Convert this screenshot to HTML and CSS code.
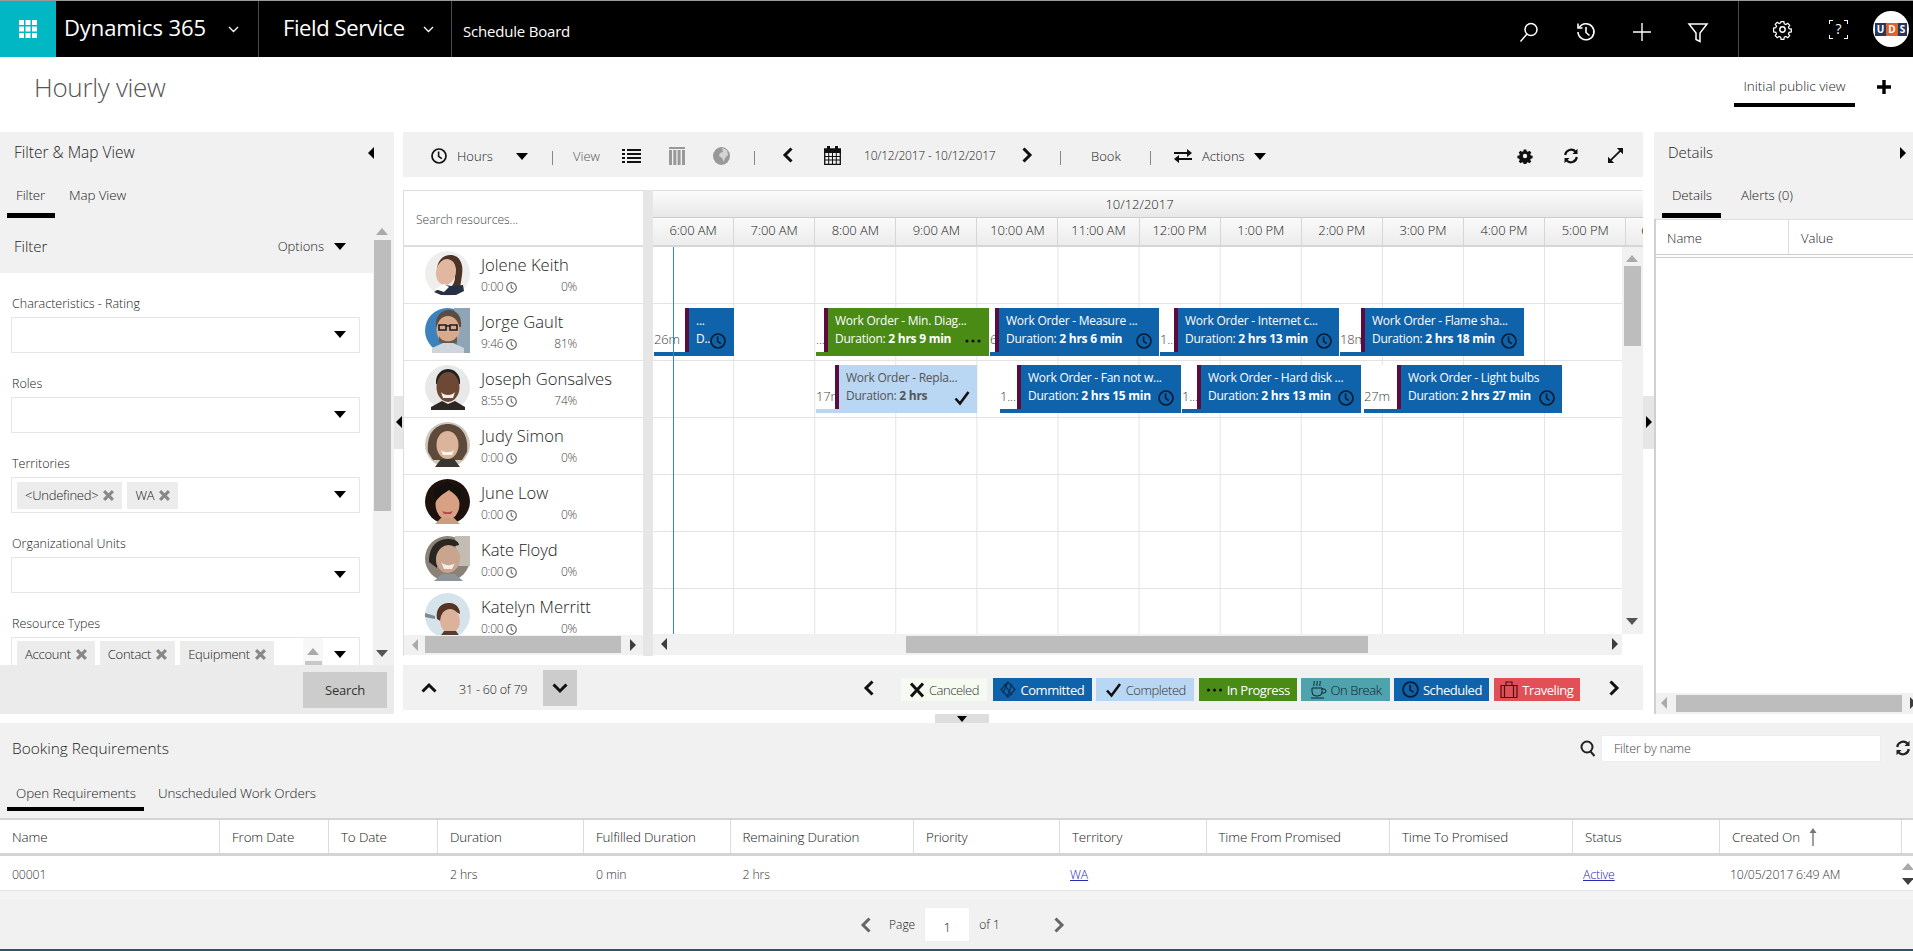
FILE: index.html
```html
<!DOCTYPE html>
<html lang="en">
<head>
    <meta charset="UTF-8">
    <title>Schedule Board</title>
    <link rel="stylesheet" href="styles.css">
</head>
<body>
    <!-- shared icons -->
    <svg class="defs" width="0" height="0">
        <symbol id="i-clock" viewBox="0 0 16 16"><circle cx="8" cy="8" r="7" fill="none" stroke="currentColor" stroke-width="1.7"/><path d="M7.6 3.6V8.4l3.2 2.3" fill="none" stroke="currentColor" stroke-width="1.6"/></symbol>
        <symbol id="i-check" viewBox="0 0 16 16"><path d="M1.5 8.5l4.5 5L14.5 2" fill="none" stroke="currentColor" stroke-width="2.6"/></symbol>
        <symbol id="i-x" viewBox="0 0 16 16"><path d="M2 1.5l12 13M14 1.5l-12 13" fill="none" stroke="currentColor" stroke-width="3"/></symbol>
        <symbol id="i-dots" viewBox="0 0 16 4"><circle cx="2" cy="2" r="1.6" fill="currentColor"/><circle cx="8" cy="2" r="1.6" fill="currentColor"/><circle cx="14" cy="2" r="1.6" fill="currentColor"/></symbol>
        <symbol id="i-left" viewBox="0 0 12 16"><path d="M9.5 1.5L3 8l6.5 6.5" fill="none" stroke="currentColor" stroke-width="3"/></symbol>
        <symbol id="i-right" viewBox="0 0 12 16"><path d="M2.5 1.5L9 8l-6.5 6.5" fill="none" stroke="currentColor" stroke-width="3"/></symbol>
        <symbol id="i-up" viewBox="0 0 16 12"><path d="M1.5 9.5L8 3l6.5 6.5" fill="none" stroke="currentColor" stroke-width="3"/></symbol>
        <symbol id="i-down" viewBox="0 0 16 12"><path d="M1.5 2.5L8 9l6.5-6.5" fill="none" stroke="currentColor" stroke-width="3"/></symbol>
        <symbol id="i-tiny-x" viewBox="0 0 10 10"><path d="M1 1l8 8M9 1l-8 8" fill="none" stroke="currentColor" stroke-width="2.8"/></symbol>
        <symbol id="i-sync" viewBox="0 0 16 16"><path d="M2.2 7A6 6 0 0 1 12.6 3.7M13.8 9A6 6 0 0 1 3.4 12.3" fill="none" stroke="currentColor" stroke-width="2.2"/><path d="M14.5 0.8V6H9.5zM1.5 15.2V10H6.5z" fill="currentColor"/></symbol>
        <symbol id="i-gear" viewBox="0 0 16 16"><path fill="currentColor" fill-rule="evenodd" d="M6.5 0.5h3l.4 2.1 1.4.6 1.8-1.2 2.1 2.1-1.2 1.8.6 1.4 2.1.4v3l-2.1.4-.6 1.4 1.2 1.8-2.1 2.1-1.8-1.2-1.4.6-.4 2.1h-3l-.4-2.1-1.4-.6-1.8 1.2-2.1-2.1 1.2-1.8-.6-1.4-2.1-.4v-3l2.1-.4.6-1.4-1.2-1.8 2.1-2.1 1.8 1.2 1.4-.6zM8 5.5a2.5 2.5 0 1 0 0 5 2.5 2.5 0 0 0 0-5z" transform="translate(1 1) scale(.875)"/></symbol>
    </svg>

    <header class="topbar">
        <div class="app-tile">
            <svg width="18" height="18" viewBox="0 0 18 18" fill="#fff"><rect width="5" height="5"/><rect x="6.5" width="5" height="5"/><rect x="13" width="5" height="5"/><rect y="6.5" width="5" height="5"/><rect x="6.5" y="6.5" width="5" height="5"/><rect x="13" y="6.5" width="5" height="5"/><rect y="13" width="5" height="5"/><rect x="6.5" y="13" width="5" height="5"/><rect x="13" y="13" width="5" height="5"/></svg>
        </div>
        <div class="nav-group nav-first">
            <span class="nav-title">Dynamics 365</span>
            <svg class="nav-chev" width="11" height="7" viewBox="0 0 11 7"><path d="M1 1l4.5 4.5L10 1" fill="none" stroke="#fff" stroke-width="1.3"/></svg>
        </div>
        <div class="nav-group nav-second">
            <span class="nav-title">Field Service</span>
            <svg class="nav-chev" width="11" height="7" viewBox="0 0 11 7"><path d="M1 1l4.5 4.5L10 1" fill="none" stroke="#fff" stroke-width="1.3"/></svg>
        </div>
        <div class="nav-page">Schedule Board</div>
        <div class="top-actions">
            <svg width="22" height="22" viewBox="0 0 22 22" fill="none" stroke="#fff" stroke-width="1.5"><circle cx="13" cy="8.5" r="6"/><path d="M9 13L2.5 20.5"/></svg>
            <svg width="22" height="22" viewBox="0 0 22 22" fill="none" stroke="#fff" stroke-width="1.6"><path d="M4.2 6.5A8 8 0 1 1 3 11"/><path d="M3 2.5V7h4.5"/><path d="M11 6v5.5l3.5 3"/></svg>
            <svg width="20" height="20" viewBox="0 0 20 20" stroke="#fff" stroke-width="1.4"><path d="M10 1v18M1 10h18"/></svg>
            <svg width="22" height="22" viewBox="0 0 22 22" fill="none" stroke="#fff" stroke-width="1.5"><path d="M2 3h18l-7 9v8.5l-4-2V12z"/></svg>
        </div>
        <div class="top-tools">
            <svg class="tool-gear" width="21" height="21" viewBox="0 0 22 22" fill="none" stroke="#fff" stroke-width="1.5"><circle cx="11" cy="11" r="2.8"/><path d="M9.3 1.5h3.4l.5 2.7 1.9.8 2.3-1.5 2.4 2.4-1.5 2.3.8 1.9 2.7.5v3.4l-2.7.5-.8 1.9 1.5 2.3-2.4 2.4-2.3-1.5-1.9.8-.5 2.7H9.3l-.5-2.7-1.9-.8-2.3 1.5-2.4-2.4 1.5-2.3-.8-1.9-2.7-.5V9.3l2.7-.5.8-1.9-1.5-2.3 2.4-2.4 2.3 1.5 1.9-.8z" transform="translate(1.5 1.5) scale(.86)"/></svg>
            <div class="help-box">?</div>
            <div class="user-badge"><span class="ub-u">U</span><span class="ub-d">D</span><span class="ub-s">S</span></div>
        </div>
    </header>

    <div class="page-head">
        <h1 class="page-title">Hourly view</h1>
        <div class="view-tab">Initial public view</div>
        <svg class="view-add" width="14" height="14" viewBox="0 0 14 14"><path d="M7 0v14M0 7h14" stroke="#000" stroke-width="3.4"/></svg>
    </div>

    <main class="main">
        <!-- Filter panel -->
        <aside class="filter-panel">
            <div class="panel-top">
                <div class="panel-title">Filter &amp; Map View <span class="tri-left panel-tri"></span></div>
                <div class="tabs filter-tabs">
                    <div class="tab active">Filter</div>
                    <div class="tab">Map View</div>
                </div>
            </div>
            <div class="filter-scroll">
                <div class="filter-body">
                    <div class="filter-head">
                        <span class="filter-name">Filter</span>
                        <span class="filter-options">Options</span>
                        <span class="tri-down"></span>
                    </div>
                    <div class="fields">
                        <div class="field">
                            <label>Characteristics - Rating</label>
                            <div class="select"><span class="tri-down"></span></div>
                        </div>
                        <div class="field">
                            <label>Roles</label>
                            <div class="select"><span class="tri-down"></span></div>
                        </div>
                        <div class="field">
                            <label>Territories</label>
                            <div class="select">
                                <span class="chip">&lt;Undefined&gt; <svg width="11" height="11"><use href="#i-tiny-x"/></svg></span>
                                <span class="chip">WA <svg width="11" height="11"><use href="#i-tiny-x"/></svg></span>
                                <span class="tri-down"></span>
                            </div>
                        </div>
                        <div class="field">
                            <label>Organizational Units</label>
                            <div class="select"><span class="tri-down"></span></div>
                        </div>
                        <div class="field">
                            <label>Resource Types</label>
                            <div class="select select-open">
                                <span class="chip">Account <svg width="11" height="11"><use href="#i-tiny-x"/></svg></span>
                                <span class="chip">Contact <svg width="11" height="11"><use href="#i-tiny-x"/></svg></span>
                                <span class="chip">Equipment <svg width="11" height="11"><use href="#i-tiny-x"/></svg></span>
                                <span class="mini-scroll"><span class="tri-up tri-grey"></span><span class="mini-thumb"></span></span>
                                <span class="tri-down"></span>
                            </div>
                        </div>
                    </div>
                </div>
                <div class="vscroll filter-vscroll">
                    <span class="tri-up tri-grey"></span>
                    <div class="thumb"></div>
                    <span class="tri-down tri-grey"></span>
                </div>
            </div>
            <div class="search-bar"><button class="search-btn">Search</button></div>
        </aside>

        <div class="splitter"><span class="tri-left"></span></div>

        <!-- Schedule board -->
        <section class="center">
            <div class="toolbar">
                <svg class="tb-clock" width="16" height="16"><use href="#i-clock"/></svg>
                <span class="tb-hours">Hours</span>
                <span class="tri-down tb-caret"></span>
                <span class="tb-sep tb-sep1"></span>
                <span class="tb-view">View</span>
                <svg class="tb-list" width="19" height="14" viewBox="0 0 19 14"><path d="M0 1h3M5 1h14M0 5h3M5 5h14M0 9h3M5 9h14M0 13h3M5 13h14" stroke="#111" stroke-width="2.2"/></svg>
                <svg class="tb-grid" width="16" height="18" viewBox="0 0 16 18" fill="#999"><rect y="0" width="16" height="2"/><rect y="3" width="3" height="15"/><rect x="4.3" y="3" width="3" height="15"/><rect x="8.6" y="3" width="3" height="15"/><rect x="13" y="3" width="3" height="15"/></svg>
                <svg class="tb-globe" width="17" height="18" viewBox="0 0 17 18"><ellipse cx="8.5" cy="9" rx="8.5" ry="9" fill="#999"/><path d="M9 1l5 2 1 5-3 3-1 4-2-4-3-2 1-3 3-1z" fill="#d4d4d4"/></svg>
                <span class="tb-sep tb-sep2"></span>
                <svg class="tb-prev" width="12" height="16"><use href="#i-left"/></svg>
                <svg class="tb-cal" width="17" height="19" viewBox="0 0 17 19"><path d="M.7 3h15.6v15.3H.7z" fill="none" stroke="#111" stroke-width="1.3"/><path d="M0 3h17v4H0zM3 0h3v4H3zM11 0h3v4h-3z" fill="#111"/><path d="M4.7 7v11M8.5 7v11M12.3 7v11M1 10.5h15M1 14h15" stroke="#111"/></svg>
                <span class="tb-date">10/12/2017 - 10/12/2017</span>
                <svg class="tb-next" width="12" height="16"><use href="#i-right"/></svg>
                <span class="tb-sep tb-sep3"></span>
                <span class="tb-book">Book</span>
                <span class="tb-sep tb-sep4"></span>
                <svg class="tb-swap" width="18" height="14" viewBox="0 0 18 14"><path d="M0 4h14" stroke="#111" stroke-width="2"/><path d="M13 0l5 4-5 4z" fill="#111"/><path d="M18 10H4" stroke="#111" stroke-width="2"/><path d="M5 6l-5 4 5 4z" fill="#111"/></svg>
                <span class="tb-actions">Actions</span>
                <span class="tri-down tb-caret2"></span>
                <svg class="tb-gear" width="16" height="16"><use href="#i-gear"/></svg>
                <svg class="tb-sync" width="16" height="16"><use href="#i-sync"/></svg>
                <svg class="tb-expand" width="15" height="15" viewBox="0 0 17 17"><path d="M2 15L15 2" stroke="#111" stroke-width="2"/><path d="M10 0h7v7zM0 10v7h7z" fill="#111"/></svg>
            </div>

            <div class="board">
                <div class="res-col">
                    <div class="res-search">Search resources...</div>
                    <div class="res-list">
                        <div class="res-row">
                            <svg class="avatar" viewBox="0 0 45 45"><circle cx="22.5" cy="22.5" r="22.5" fill="#f0eeec"/><path d="M12 22C11 8 20 3 27 4c7 1 12 8 10 20l-2 13-8-2c6-8 2-16-3-19-3 4-8 5-12 6z" fill="#4a3428"/><ellipse cx="21" cy="21" rx="10" ry="13" fill="#e2b7a0" transform="rotate(12 21 21)"/><path d="M9 41l11-7 6 1 12-1 1 6-8 4H16z" fill="#253044"/><path d="M10 38l9-5 5 3-5 5z" fill="#fff"/></svg>
                            <div class="res-info">
                                <div class="res-name">Jolene Keith</div>
                                <div class="res-stats">0:00 <svg width="11" height="11"><use href="#i-clock"/></svg><span class="res-pct">0%</span></div>
                            </div>
                        </div>
                        <div class="res-row">
                            <svg class="avatar" viewBox="0 0 45 45"><circle cx="22.5" cy="22.5" r="22.5" fill="#3c83bd"/><path d="M29 0h16v45H33z" fill="#8fa5b5"/><path d="M11 19C10 6 18 2 24 2s13 4 12 17z" fill="#5d4c3e"/><ellipse cx="23" cy="22" rx="11.5" ry="14" fill="#d8ab8f"/><path d="M14 17h7v5h-7zM25 17h7v5h-7zM21 18h4" fill="none" stroke="#1e1e22" stroke-width="1.6"/><path d="M14 28c3 7 15 7 18 0v6l-9 4-9-4z" fill="#6d5648"/><path d="M7 40l11-5h10l11 5v5H7z" fill="#cfd5dc"/></svg>
                            <div class="res-info">
                                <div class="res-name">Jorge Gault</div>
                                <div class="res-stats">9:46 <svg width="11" height="11"><use href="#i-clock"/></svg><span class="res-pct">81%</span></div>
                            </div>
                        </div>
                        <div class="res-row">
                            <svg class="avatar" viewBox="0 0 45 45"><circle cx="22.5" cy="22.5" r="22.5" fill="#e8e8e8"/><path d="M11 19C10 8 18 4 23 4s13 4 12 15z" fill="#232020"/><ellipse cx="23" cy="22" rx="11.5" ry="15" fill="#6d4834"/><path d="M16 27c3 4 11 4 14 0l-2 6H18z" fill="#f4eee8"/><path d="M6 42l11-6 6 3 7-3 10 6v3H6z" fill="#2a2724"/></svg>
                            <div class="res-info">
                                <div class="res-name">Joseph Gonsalves</div>
                                <div class="res-stats">8:55 <svg width="11" height="11"><use href="#i-clock"/></svg><span class="res-pct">74%</span></div>
                            </div>
                        </div>
                        <div class="res-row">
                            <svg class="avatar" viewBox="0 0 45 45"><circle cx="22.5" cy="22.5" r="22.5" fill="#cfc6bc"/><path d="M3 30C1 10 12 2 23 2s21 9 19 28l-5 8H8z" fill="#5d4a3a"/><ellipse cx="22.5" cy="23" rx="11" ry="14" fill="#dcb49b"/><path d="M16 28c3 3 10 3 13 0l-2 5h-9z" fill="#fbf5ef"/><path d="M10 45l6-8h13l6 8z" fill="#3b3630"/></svg>
                            <div class="res-info">
                                <div class="res-name">Judy Simon</div>
                                <div class="res-stats">0:00 <svg width="11" height="11"><use href="#i-clock"/></svg><span class="res-pct">0%</span></div>
                            </div>
                        </div>
                        <div class="res-row">
                            <svg class="avatar" viewBox="0 0 45 45"><circle cx="22.5" cy="22.5" r="22.5" fill="#1d120e"/><ellipse cx="22.5" cy="25" rx="12" ry="16" fill="#d9a184"/><path d="M10 24C14 16 22 13 24 11c4 3 9 6 11 13l1-14L22 3 9 10z" fill="#14100e"/><path d="M17 32c3 1.5 8 1.5 11 0l-2 3h-7z" fill="#b5484c"/><path d="M10 45l6-6h13l6 6z" fill="#cf9c80"/></svg>
                            <div class="res-info">
                                <div class="res-name">June Low</div>
                                <div class="res-stats">0:00 <svg width="11" height="11"><use href="#i-clock"/></svg><span class="res-pct">0%</span></div>
                            </div>
                        </div>
                        <div class="res-row">
                            <svg class="avatar" viewBox="0 0 45 45"><circle cx="22.5" cy="22.5" r="22.5" fill="#8a8279"/><path d="M30 0h15v30H32z" fill="#c3bcb2"/><path d="M4 26C4 8 14 3 24 3c6 0 10 3 10 6L15 14l-3 18z" fill="#2c2622"/><ellipse cx="23" cy="23" rx="12" ry="14" fill="#c9a48e" transform="rotate(8 23 23)"/><path d="M16 26c3 4 11 4 14 1l-3 6h-8z" fill="#f2ede8"/><path d="M9 45l8-7h13l8 7z" fill="#8e9497"/></svg>
                            <div class="res-info">
                                <div class="res-name">Kate Floyd</div>
                                <div class="res-stats">0:00 <svg width="11" height="11"><use href="#i-clock"/></svg><span class="res-pct">0%</span></div>
                            </div>
                        </div>
                        <div class="res-row">
                            <svg class="avatar" viewBox="0 0 45 45"><circle cx="22.5" cy="22.5" r="22.5" fill="#d7e3ea"/><path d="M0 20l10 3v3L0 24z" fill="#7b8a92"/><path d="M12 26C10 14 18 9 25 10c6 0 10 5 10 11-6-3-13-3-16-1l-2 9z" fill="#543423"/><ellipse cx="25" cy="28" rx="10" ry="12" fill="#ddb29a"/><path d="M14 45l5-7h12l5 7z" fill="#593c2c"/></svg>
                            <div class="res-info">
                                <div class="res-name">Katelyn Merritt</div>
                                <div class="res-stats">0:00 <svg width="11" height="11"><use href="#i-clock"/></svg><span class="res-pct">0%</span></div>
                            </div>
                        </div>
                    </div>
                    <div class="hscroll res-hscroll">
                        <span class="tri-left tri-grey"></span>
                        <div class="thumb"></div>
                        <span class="tri-right tri-dark"></span>
                    </div>
                </div>
                <div class="board-gap"></div>
                <div class="sched">
                    <div class="sched-date">10/12/2017</div>
                    <div class="sched-hours">
                        <div class="hour">6:00 AM</div>
                        <div class="hour">7:00 AM</div>
                        <div class="hour">8:00 AM</div>
                        <div class="hour">9:00 AM</div>
                        <div class="hour">10:00 AM</div>
                        <div class="hour">11:00 AM</div>
                        <div class="hour">12:00 PM</div>
                        <div class="hour">1:00 PM</div>
                        <div class="hour">2:00 PM</div>
                        <div class="hour">3:00 PM</div>
                        <div class="hour">4:00 PM</div>
                        <div class="hour">5:00 PM</div>
                        <div class="hour hour-cut">6</div>
                    </div>
                    <div class="sched-body">
                        <div class="sched-grid">
                            <div class="sched-row"></div>
                            <div class="sched-row">
                                <div class="job scheduled" style="left:1px">
                                    <div class="travel" style="width:31px">26m</div><div class="job-edge"></div>
                                    <div class="job-body" style="width:45px"><div class="job-title">...</div><div class="job-dur">D..</div><svg class="job-icon job-icon-tight" width="16" height="16"><use href="#i-clock"/></svg></div>
                                </div>
                                <div class="job progress" style="left:163px">
                                    <div class="travel" style="width:8px">...</div><div class="job-edge"></div>
                                    <div class="job-body" style="width:161px"><div class="job-title">Work Order - Min. Diag...</div><div class="job-dur">Duration: <b>2 hrs 9 min</b></div><svg class="job-dots" width="16" height="4"><use href="#i-dots"/></svg></div>
                                </div>
                                <div class="job scheduled" style="left:337px">
                                    <div class="travel" style="width:5px">6</div><div class="job-edge"></div>
                                    <div class="job-body" style="width:160px"><div class="job-title">Work Order - Measure ...</div><div class="job-dur">Duration: <b>2 hrs 6 min</b></div><svg class="job-icon" width="16" height="16"><use href="#i-clock"/></svg></div>
                                </div>
                                <div class="job scheduled" style="left:507px">
                                    <div class="travel" style="width:14px">1...</div><div class="job-edge"></div>
                                    <div class="job-body" style="width:161px"><div class="job-title">Work Order - Internet c...</div><div class="job-dur">Duration: <b>2 hrs 13 min</b></div><svg class="job-icon" width="16" height="16"><use href="#i-clock"/></svg></div>
                                </div>
                                <div class="job scheduled" style="left:687px">
                                    <div class="travel" style="width:21px">18m</div><div class="job-edge"></div>
                                    <div class="job-body" style="width:159px"><div class="job-title">Work Order - Flame sha...</div><div class="job-dur">Duration: <b>2 hrs 18 min</b></div><svg class="job-icon" width="16" height="16"><use href="#i-clock"/></svg></div>
                                </div>
                            </div>
                            <div class="sched-row">
                                <div class="job completed" style="left:163px">
                                    <div class="travel" style="width:19px">17m</div><div class="job-edge"></div>
                                    <div class="job-body" style="width:138px"><div class="job-title">Work Order - Repla...</div><div class="job-dur">Duration: <b>2 hrs</b></div><svg class="job-icon" width="16" height="16"><use href="#i-check"/></svg></div>
                                </div>
                                <div class="job scheduled" style="left:347px">
                                    <div class="travel" style="width:17px">1...</div><div class="job-edge"></div>
                                    <div class="job-body" style="width:160px"><div class="job-title">Work Order - Fan not w...</div><div class="job-dur">Duration: <b>2 hrs 15 min</b></div><svg class="job-icon" width="16" height="16"><use href="#i-clock"/></svg></div>
                                </div>
                                <div class="job scheduled" style="left:529px">
                                    <div class="travel" style="width:15px">1...</div><div class="job-edge"></div>
                                    <div class="job-body" style="width:160px"><div class="job-title">Work Order - Hard disk ...</div><div class="job-dur">Duration: <b>2 hrs 13 min</b></div><svg class="job-icon" width="16" height="16"><use href="#i-clock"/></svg></div>
                                </div>
                                <div class="job scheduled" style="left:711px">
                                    <div class="travel" style="width:33px">27m</div><div class="job-edge"></div>
                                    <div class="job-body" style="width:161px"><div class="job-title">Work Order - Light bulbs</div><div class="job-dur">Duration: <b>2 hrs 27 min</b></div><svg class="job-icon" width="16" height="16"><use href="#i-clock"/></svg></div>
                                </div>
                            </div>
                            <div class="sched-row"></div>
                            <div class="sched-row"></div>
                            <div class="sched-row"></div>
                            <div class="sched-row"></div>
                            <div class="now-line"></div>
                        </div>
                        <div class="vscroll sched-vscroll">
                            <span class="tri-up tri-grey"></span>
                            <div class="thumb"></div>
                            <span class="tri-down tri-grey"></span>
                        </div>
                    </div>
                    <div class="hscroll sched-hscroll">
                        <span class="tri-left tri-dark"></span>
                        <div class="thumb"></div>
                        <span class="tri-right tri-dark"></span>
                    </div>
                </div>
            </div>

            <div class="pager">
                <svg class="pg-up" width="16" height="12"><use href="#i-up"/></svg>
                <span class="pg-count">31 - 60 of 79</span>
                <div class="pg-down"><svg width="16" height="12"><use href="#i-down"/></svg></div>
                <svg class="lg-prev" width="12" height="16"><use href="#i-left"/></svg>
                <div class="legend">
                    <div class="lg-item lg-canceled"><svg width="16" height="16"><use href="#i-x"/></svg>Canceled</div>
                    <div class="lg-item lg-committed"><svg width="16" height="17" viewBox="0 0 16 17" fill="none" stroke="#0b2f52" stroke-width="1.2"><path d="M8 1l7 7.5L8 16 1 8.5z"/><path d="M4 3l8 11M8 1L3 12M12 3L7 16"/></svg>Committed</div>
                    <div class="lg-item lg-completed"><svg width="17" height="16"><use href="#i-check"/></svg>Completed</div>
                    <div class="lg-item lg-progress"><svg width="17" height="4" viewBox="0 0 16 4"><use href="#i-dots"/></svg>In Progress</div>
                    <div class="lg-item lg-break"><svg width="17" height="19" viewBox="0 0 17 19" fill="none" stroke="#123" stroke-width="1"><path d="M2 8h10v4a4 4 0 0 1-4 4H6a4 4 0 0 1-4-4z"/><path d="M12 9h2a1.5 1.5 0 0 1 0 4h-2M1 18h13M4 6c-1-2 1-2 0-5M7 6c-1-2 1-2 0-5M10 6c-1-2 1-2 0-5"/></svg>On Break</div>
                    <div class="lg-item lg-scheduled"><svg width="17" height="17"><use href="#i-clock"/></svg>Scheduled</div>
                    <div class="lg-item lg-traveling"><svg width="18" height="17" viewBox="0 0 18 17" fill="none" stroke="#4b1216" stroke-width="1.2"><path d="M1 4.5h16v12H1zM6 4.5V1h6v3.5M4.5 4.5v12M13.5 4.5v12"/></svg>Traveling</div>
                </div>
                <svg class="lg-next" width="12" height="16"><use href="#i-right"/></svg>
            </div>
        </section>

        <div class="splitter splitter-right"><span class="tri-right"></span></div>

        <!-- Details panel -->
        <aside class="details-panel">
            <div class="panel-top">
                <div class="panel-title">Details <span class="tri-right panel-tri"></span></div>
                <div class="tabs details-tabs">
                    <div class="tab active">Details</div>
                    <div class="tab">Alerts (0)</div>
                </div>
            </div>
            <div class="details-body">
                <div class="details-head">
                    <div class="dh-name">Name</div>
                    <div class="dh-value">Value</div>
                </div>
                <div class="details-empty"></div>
                <div class="hscroll details-hscroll">
                    <span class="tri-left tri-grey"></span>
                    <div class="thumb"></div>
                    <span class="tri-right tri-dark"></span>
                </div>
            </div>
        </aside>
    </main>

    <!-- Booking requirements -->
    <section class="bottom">
        <div class="collapse-tab"><span class="tri-down"></span></div>
        <div class="req-head">
            <div class="req-title">Booking Requirements</div>
            <svg class="req-search" width="16" height="17" viewBox="0 0 16 17" fill="none" stroke="#222" stroke-width="2"><circle cx="7" cy="7" r="5.5"/><path d="M10.5 11.5L14.5 16"/></svg>
            <div class="req-filter">Filter by name</div>
            <svg class="req-sync" width="16" height="16"><use href="#i-sync"/></svg>
        </div>
        <div class="tabs req-tabs">
            <div class="tab active">Open Requirements</div>
            <div class="tab">Unscheduled Work Orders</div>
        </div>
        <div class="req-table">
            <div class="req-row req-header">
                <div class="c1">Name</div><div class="c2">From Date</div><div class="c3">To Date</div><div class="c4">Duration</div><div class="c5">Fulfilled Duration</div><div class="c6">Remaining Duration</div><div class="c7">Priority</div><div class="c8">Territory</div><div class="c9">Time From Promised</div><div class="c10">Time To Promised</div><div class="c11">Status</div>
                <div class="c12">Created On <svg width="10" height="18" viewBox="0 0 10 18"><path d="M5 2v16" stroke="#777" stroke-width="1.4"/><path d="M5 0l3.5 5h-7z" fill="#777"/></svg></div>
                <div class="c13"></div>
            </div>
            <div class="req-row req-data">
                <div class="c1">00001</div><div class="c2"></div><div class="c3"></div><div class="c4">2 hrs</div><div class="c5">0 min</div><div class="c6">2 hrs</div><div class="c7"></div><div class="c8"><a href="#">WA</a></div><div class="c9"></div><div class="c10"></div><div class="c11"><a href="#">Active</a></div><div class="c12">10/05/2017 6:49 AM</div>
                <div class="c13 req-scroll"><span class="tri-up tri-grey"></span><span class="tri-down tri-dark"></span></div>
            </div>
            <div class="req-tail"></div>
        </div>
        <div class="req-pager">
            <svg class="rp-prev" width="12" height="16"><use href="#i-left"/></svg>
            <span>Page</span>
            <div class="rp-input">1</div>
            <span>of 1</span>
            <svg class="rp-next" width="12" height="16"><use href="#i-right"/></svg>
        </div>
    </section>
    <div class="foot-strip"></div>
</body>
</html>
```
FILE: styles.css
```css
* {
    box-sizing: border-box;
}
html, body {
    margin: 0;
    height: 951px;
    overflow: hidden;
}
body {
    font-family: "Open Sans", "Noto Sans", sans-serif;
    font-size: 13px;
    color: #444;
    background-color: #fff;
    width: 1913px;
}
.defs {
    position: absolute;
}

/* triangles */
.tri-down, .tri-up, .tri-left, .tri-right {
    display: inline-block;
    width: 0;
    height: 0;
    flex: none;
}
.tri-down {
    border-left: 6px solid transparent;
    border-right: 6px solid transparent;
    border-top: 7px solid #000;
}
.tri-up {
    border-left: 6px solid transparent;
    border-right: 6px solid transparent;
    border-bottom: 7px solid #000;
}
.tri-left {
    border-top: 6px solid transparent;
    border-bottom: 6px solid transparent;
    border-right: 6px solid #000;
}
.tri-right {
    border-top: 6px solid transparent;
    border-bottom: 6px solid transparent;
    border-left: 6px solid #000;
}
.tri-up.tri-grey {
    border-bottom-color: #aaa;
}
.tri-down.tri-grey {
    border-top-color: #555;
}
.tri-left.tri-grey {
    border-right-color: #aaa;
}
.tri-dark {
    opacity: .75;
}

/* top bar */
.topbar {
    height: 57px;
    background-color: #000;
    border-top: 1px solid #9a9a9a;
    display: flex;
    color: #fff;
}
.app-tile {
    width: 56px;
    background-color: #00b7c3;
    display: flex;
    align-items: center;
    justify-content: center;
}
.nav-group {
    display: flex;
    align-items: center;
    border-right: 1px solid #4a4a4a;
}
.nav-first {
    width: 203px;
    padding-left: 8px;
}
.nav-second {
    width: 193px;
    padding-left: 24px;
}
.nav-title {
    font-size: 22px;
    line-height: 1;
    margin-top: -5px;
}
.nav-first .nav-title {
    letter-spacing: -.1px;
}
.nav-second .nav-title {
    letter-spacing: -.4px;
}
.nav-first .nav-chev {
    margin-left: 22px;
}
.nav-second .nav-chev {
    margin-left: 18px;
}
.nav-page {
    padding: 15px 0 0 11px;
    font-size: 15px;
    line-height: 30px;
    letter-spacing: -.2px;
}
.top-actions {
    margin-left: auto;
    display: flex;
    align-items: center;
    gap: 35px;
    width: 228px;
    padding: 5px 0 0 7px;
    border-right: 1px solid #4a4a4a;
    height: 100%;
}
.top-tools {
    display: flex;
    align-items: center;
    width: 174px;
    padding-left: 33px;
}
.help-box {
    width: 19px;
    height: 19px;
    margin-left: 36px;
    font-size: 14px;
    line-height: 17px;
    text-align: center;
    background:
        linear-gradient(#fff, #fff) 0 0 / 4px 1px no-repeat,
        linear-gradient(#fff, #fff) 0 0 / 1px 4px no-repeat,
        linear-gradient(#fff, #fff) 100% 0 / 4px 1px no-repeat,
        linear-gradient(#fff, #fff) 100% 0 / 1px 4px no-repeat,
        linear-gradient(#fff, #fff) 0 100% / 4px 1px no-repeat,
        linear-gradient(#fff, #fff) 0 100% / 1px 4px no-repeat,
        linear-gradient(#fff, #fff) 100% 100% / 4px 1px no-repeat,
        linear-gradient(#fff, #fff) 100% 100% / 1px 4px no-repeat;
}
.user-badge {
    width: 36px;
    height: 36px;
    margin-left: 25px;
    border-radius: 50%;
    background-color: #fff;
    display: flex;
    align-items: center;
    justify-content: center;
    font-size: 10px;
    font-weight: 700;
    line-height: 13px;
    color: #fff;
    flex: none;
}
.ub-u, .ub-s {
    background-color: #26375f;
    padding: 0 2px;
}
.ub-d {
    background-color: #d9642c;
    padding: 0 2px;
}

/* page head */
.page-head {
    height: 75px;
    display: flex;
    align-items: flex-start;
}
.page-title {
    margin: 11px 0 0 34px;
    font-size: 26px;
    font-weight: 300;
    line-height: 38px;
    color: #555;
    letter-spacing: -.3px;
}
.view-tab {
    margin-left: auto;
    width: 121px;
    height: 50px;
    padding-top: 19px;
    text-align: center;
    font-size: 13.5px;
    font-weight: 300;
    line-height: 20px;
    color: #222;
    border-bottom: 4px solid #000;
}
.view-add {
    margin: 23px 22px 0 22px;
}

/* main row */
.main {
    height: 591px;
    display: flex;
}
.filter-panel {
    width: 394px;
    display: flex;
    flex-direction: column;
    background-color: #f1f1f1;
    height: 582px;
}
.panel-top {
    height: 87px;
    background-color: #f1f1f1;
    position: relative;
}
.panel-title {
    padding: 9px 14px 0;
    font-size: 15.5px;
    font-weight: 300;
    line-height: 22px;
    color: #222;
}
.panel-tri {
    position: absolute;
    top: 15px;
    right: 20px;
}
.details-panel .panel-tri {
    right: 7px;
}
.details-panel .panel-title {
    font-size: 15px;
    letter-spacing: -.1px;
}
.tabs {
    display: flex;
}
.tab {
    font-size: 13.4px;
    font-weight: 300;
    letter-spacing: -.1px;
    line-height: 20px;
    color: #222;
    white-space: nowrap;
}
.tab.active {
    border-bottom: 5px solid #000;
}
.filter-tabs {
    margin: 22px 0 0 7px;
}
.filter-tabs .tab {
    padding: 0 9px 8px;
    height: 33px;
}
.filter-tabs .tab.active {
    width: 48px;
}
.filter-tabs .tab + .tab {
    padding-left: 14px;
}
.filter-scroll {
    height: 446px;
    display: flex;
}
.filter-body {
    width: 373px;
    overflow: hidden;
    background-color: #fff;
}
.filter-head {
    height: 54px;
    background-color: #f1f1f1;
    display: flex;
    align-items: center;
    padding: 0 27px 0 14px;
}
.filter-name {
    font-size: 15px;
    font-weight: 300;
    color: #222;
}
.filter-options {
    margin-left: auto;
    margin-right: 10px;
    font-size: 13px;
    font-weight: 300;
    color: #222;
}
.field {
    height: 80px;
    padding: 0 13px 0 11px;
}
.fields {
    padding-top: 21px;
}
.field label {
    display: block;
    height: 23px;
    padding-left: 1px;
    font-size: 12.5px;
    font-weight: 300;
    line-height: 20px;
    color: #222;
}
.select {
    height: 36px;
    border: 1px solid #e6e6e6;
    display: flex;
    align-items: center;
    gap: 5px;
    padding-left: 5px;
    position: relative;
}
.select > .tri-down {
    position: absolute;
    right: 13px;
    top: 13px;
}
.chip {
    background-color: #ececec;
    height: 27px;
    padding: 0 8px;
    font-size: 13px;
    font-weight: 300;
    line-height: 27px;
    letter-spacing: -.25px;
    color: #222;
    display: flex;
    align-items: center;
    gap: 5px;
    white-space: nowrap;
}
.chip svg {
    color: #888;
}
.select-open {
    align-items: flex-start;
    padding-top: 3px;
    overflow: hidden;
}
.mini-scroll {
    position: absolute;
    left: 291px;
    top: 0;
    width: 20px;
    height: 36px;
    background-color: #f7f7f7;
    display: flex;
    flex-direction: column;
    align-items: center;
    padding-top: 10px;
    gap: 6px;
}
.mini-thumb {
    width: 17px;
    height: 12px;
    background-color: #c8c8c8;
}
.vscroll {
    width: 21px;
    position: relative;
    background-color: #f1f1f1;
}
.vscroll .thumb {
    position: absolute;
    left: 2px;
    right: 2px;
    background-color: #bdbdbd;
}
.vscroll .tri-up, .vscroll .tri-down {
    position: absolute;
    left: 4px;
}
.filter-vscroll .tri-up {
    top: 9px;
    left: 3px;
}
.filter-vscroll .thumb {
    top: 21px;
    height: 271px;
    left: 1px;
    right: 3px;
}
.filter-vscroll .tri-down {
    bottom: 8px;
    left: 3px;
}
.sched-vscroll .tri-up {
    top: 8px;
}
.sched-vscroll .thumb {
    top: 19px;
    height: 80px;
}
.sched-vscroll .tri-down {
    bottom: 9px;
}
.search-bar {
    height: 49px;
    background-color: #ebebeb;
    padding: 7px 7px 0 0;
    text-align: right;
}
.search-btn {
    width: 84px;
    height: 36px;
    border: none;
    background-color: #ccc;
    font: 13px "Open Sans", sans-serif;
    letter-spacing: -.2px;
    color: #333;
}

/* splitters */
.splitter {
    width: 9px;
    height: 591px;
    padding-top: 264px;
    flex: none;
    display: flex;
    justify-content: center;
    background: linear-gradient(#e6e6e6, #e6e6e6) 0 264px / 100% 53px no-repeat;
}
.splitter .tri-left, .splitter .tri-right {
    margin-top: 20px;
}
.splitter-right {
    width: 11px;
}

/* center */
.center {
    width: 1240px;
    flex: none;
}
.toolbar {
    height: 45px;
    background-color: #f1f1f1;
    position: relative;
    font-size: 13px;
    font-weight: 300;
    color: #222;
}
.toolbar > * {
    position: absolute;
    top: 15px;
    line-height: 18px;
}
.tb-clock { left: 28px; color: #111; top: 16px; }
.tb-hours { left: 54px; }
.tb-caret { left: 113px; top: 21px; }
.tb-sep { width: 1px; height: 14px; background-color: #888; top: 19px; }
.tb-sep1 { left: 149px; }
.tb-view { left: 170px; color: #555; }
.tb-list { left: 219px; top: 17px; }
.tb-grid { left: 266px; top: 15px; }
.tb-globe { left: 310px; top: 15px; }
.tb-sep2 { left: 351px; }
.tb-prev { left: 379px; top: 15px; color: #111; }
.tb-cal { left: 421px; top: 14px; }
.tb-date { left: 461px; font-size: 12px; letter-spacing: -.2px; }
.tb-next { left: 618px; top: 15px; color: #111; }
.tb-sep3 { left: 657px; }
.tb-book { left: 688px; }
.tb-sep4 { left: 747px; }
.tb-swap { left: 771px; top: 17px; }
.tb-actions { left: 799px; }
.tb-caret2 { left: 851px; top: 21px; }
.tb-gear { left: 1114px; top: 16px; color: #111; }
.tb-sync { left: 1160px; top: 16px; color: #111; }
.tb-expand { left: 1205px; top: 16px; }

.board {
    height: 466px;
    margin-top: 13px;
    display: flex;
}
.res-col {
    width: 241px;
    border-left: 1px solid #ddd;
    border-top: 1px solid #ddd;
    border-right: 1px solid #e6e6e6;
    display: flex;
    flex-direction: column;
}
.res-search {
    height: 56px;
    padding: 21px 0 0 12px;
    font-size: 12px;
    font-weight: 300;
    line-height: 16px;
    color: #444;
    border-bottom: 2px solid #ddd;
    flex: none;
}
.res-list {
    height: 388px;
    overflow: hidden;
    flex: none;
}
.res-row {
    height: 57px;
    border-bottom: 1px solid #e3e3e3;
    display: flex;
    padding: 4px 0 0 21px;
    gap: 11px;
}
.avatar {
    width: 45px;
    height: 45px;
    flex: none;
    filter: blur(.6px);
}
.res-name {
    font-size: 16.6px;
    font-weight: 300;
    line-height: 22px;
    color: #222;
    margin-top: 3px;
}
.res-stats {
    display: flex;
    align-items: center;
    gap: 3px;
    width: 96px;
    font-size: 12px;
    font-weight: 300;
    line-height: 18px;
    letter-spacing: -.25px;
    color: #444;
    margin-top: 2px;
}
.res-stats svg {
    color: #666;
}
.res-pct {
    margin-left: auto;
}
.hscroll {
    position: relative;
    background-color: #f1f1f1;
}
.hscroll .thumb {
    position: absolute;
    top: 2px;
    bottom: 2px;
    background-color: #bdbdbd;
}
.hscroll .tri-left, .hscroll .tri-right {
    position: absolute;
    top: 4px;
}
.res-hscroll {
    height: 20px;
    flex: none;
}
.res-hscroll .thumb { left: 21px; right: 22px; top: 1px; bottom: 2px; }
.res-hscroll .tri-left { left: 8px; }
.res-hscroll .tri-right { right: 7px; }
.board-gap {
    width: 9px;
    background-color: #e6e6e6;
    flex: none;
}
.sched {
    width: 990px;
    display: flex;
    flex-direction: column;
}
.sched-date {
    height: 28px;
    border-top: 1px solid #ddd;
    text-align: center;
    background: linear-gradient(#fcfcfc, #e8e8e8);
    font-size: 13px;
    font-weight: 300;
    line-height: 26px;
    color: #222;
    padding-right: 17px;
    border-bottom: 1px solid #ccc;
    flex: none;
}
.sched-hours {
    height: 29px;
    display: flex;
    overflow: hidden;
    border-bottom: 2px solid #d6d6d6;
    background: linear-gradient(#fafafa, #ececec);
    flex: none;
}
.hour {
    width: 81.1px;
    flex: none;
    text-align: center;
    font-size: 13px;
    font-weight: 300;
    line-height: 25px;
    letter-spacing: -.1px;
    color: #222;
    border-right: 1px solid #d6d6d6;
}
.hour-cut {
    width: 17px;
    padding-left: 15px;
    overflow: hidden;
    text-align: left;
    white-space: nowrap;
    border-right: none;
}
.sched-body {
    height: 387px;
    display: flex;
    flex: none;
}
.sched-grid {
    width: 969px;
    position: relative;
    overflow: hidden;
    background-image: linear-gradient(90deg, transparent 80.1px, #e3e3e3 80.1px);
    background-size: 81.1px 100%;
}
.sched-row {
    height: 57px;
    border-bottom: 1px solid #e3e3e3;
    position: relative;
}
.now-line {
    position: absolute;
    left: 20px;
    top: 0;
    bottom: 0;
    width: 1px;
    background-color: #2c8fb5;
}
.job {
    position: absolute;
    top: 4px;
    height: 48px;
    display: flex;
    --job: #0f63ab;
}
.job.progress { --job: #4a8b16; }
.job.completed { --job: #b9d6f2; }
.travel {
    background-color: #fff;
    border-bottom: 4px solid var(--job);
    font-size: 13px;
    font-weight: 300;
    line-height: 19px;
    padding-top: 22px;
    color: #444;
    white-space: nowrap;
    overflow: hidden;
    letter-spacing: -.2px;
}
.job-edge {
    width: 4px;
    background-color: #5c0b3f;
    border-bottom: 4px solid var(--job);
}
.job-body {
    background-color: var(--job);
    padding: 4px 0 0 7px;
    color: #fff;
    position: relative;
    font-size: 12px;
    letter-spacing: -.25px;
    line-height: 18px;
    white-space: nowrap;
    overflow: hidden;
}
.job-dur b {
    font-weight: 700;
}
.completed .job-body {
    color: #555;
}
.job-icon {
    position: absolute;
    right: 7px;
    bottom: 7px;
    color: #0b1d33;
}
.job-icon-tight {
    left: 21px;
}
.completed .job-icon {
    color: #111;
}
.job-dots {
    position: absolute;
    right: 8px;
    bottom: 13px;
    color: #111;
}
.sched-hscroll {
    width: 969px;
    height: 21px;
    flex: none;
}
.sched-hscroll .thumb { left: 253px; width: 462px; }
.sched-hscroll .tri-left { left: 8px; }
.sched-hscroll .tri-right { right: 4px; }

/* pager and legend */
.pager {
    height: 45px;
    margin-top: 9px;
    background-color: #f1f1f1;
    display: flex;
    align-items: center;
    position: relative;
    font-size: 12.5px;
}
.pg-up {
    margin-left: 18px;
    color: #111;
}
.pg-count {
    margin: 3px 0 0 22px;
    font-weight: 300;
    letter-spacing: -.2px;
    width: 84px;
    color: #222;
}
.pg-down {
    width: 34px;
    height: 36px;
    background-color: #ccc;
    display: flex;
    align-items: center;
    justify-content: center;
    color: #111;
}
.lg-prev {
    margin-left: 286px;
    color: #111;
}
.legend {
    display: flex;
    gap: 4.4px;
    margin-left: 26px;
    padding-top: 4px;
}
.lg-item {
    height: 23px;
    display: flex;
    align-items: center;
    justify-content: center;
    gap: 4px;
    font-size: 13px;
    letter-spacing: -.45px;
    white-space: nowrap;
    color: #fff;
    overflow: hidden;
}
.lg-canceled { width: 86px; background-color: #f5fbf0; color: #333; font-weight: 300; }
.lg-committed { width: 99px; margin-left: 1.5px; background-color: #0f63ab; }
.lg-committed svg { color: #123; }
.lg-completed { width: 98px; background-color: #b9d6f2; color: #333; font-weight: 300; }
.lg-progress { width: 98px; background-color: #4a8b16; }
.lg-progress svg { color: #111; }
.lg-break { width: 89px; background-color: #4fa3ad; color: #123; font-weight: 300; }
.lg-scheduled { width: 95px; background-color: #0f63ab; }
.lg-scheduled svg { color: #0b1d33; }
.lg-traveling { width: 86px; background-color: #e34f56; }
.lg-canceled svg, .lg-completed svg { color: #111; }
.lg-next {
    margin-left: 28px;
    color: #111;
}

/* details */
.details-panel {
    width: 259px;
    flex: none;
    height: 582px;
}
.details-tabs {
    margin: 22px 0 0 8px;
}
.details-tabs .tab {
    padding: 0 10px 8px;
    height: 33px;
    margin-right: 5px;
}
.details-tabs .tab.active {
    width: 59px;
}
.details-tabs .tab + .tab {
    margin-left: 5px;
}
.details-body {
    height: 495px;
    border-left: 2px solid #d0d0d0;
    display: flex;
    flex-direction: column;
}
.details-head {
    height: 39px;
    border-top: 1px solid #ddd;
    border-bottom: 4px double #ccc;
    display: flex;
    line-height: 36px;
    font-size: 13px;
    font-weight: 300;
    color: #222;
    flex: none;
}
.dh-name {
    width: 133px;
    padding-left: 11px;
    border-right: 1px solid #ddd;
}
.dh-value {
    padding-left: 12px;
}
.details-empty {
    flex: 1;
}
.details-hscroll {
    height: 21px;
    flex: none;
}
.details-hscroll .thumb { left: 20px; right: 11px; }
.details-hscroll .tri-left { left: 5px; }
.details-hscroll .tri-right { right: -3px; }

/* booking requirements */
.bottom {
    height: 226px;
    background-color: #f1f1f1;
    position: relative;
}
.collapse-tab {
    position: absolute;
    left: 935px;
    top: -9px;
    width: 54px;
    height: 9px;
    background-color: #dedede;
    display: flex;
    justify-content: center;
    padding-top: 2px;
}
.collapse-tab .tri-down {
    border-left-width: 5px;
    border-right-width: 5px;
    border-top-width: 6px;
}
.req-head {
    height: 50px;
    display: flex;
    align-items: center;
}
.req-title {
    margin-left: 12px;
    font-size: 15.4px;
    font-weight: 300;
    color: #222;
}
.req-search {
    margin-left: auto;
    margin-right: 5px;
}
.req-filter {
    width: 280px;
    height: 27px;
    background-color: #fff;
    border: 1px solid #ededed;
    padding-left: 12px;
    font-size: 12.5px;
    font-weight: 300;
    line-height: 25px;
    letter-spacing: -.2px;
    color: #444;
}
.req-sync {
    margin: 0 2px 0 14px;
    color: #222;
    flex: none;
}
.req-tabs {
    margin: 8px 0 0 7px;
    height: 30px;
}
.req-tabs .tab {
    padding: 0 9px;
    height: 30px;
    line-height: 25px;
}
.req-tabs .tab.active {
    width: 137px;
    border-bottom-width: 4px;
}
.req-tabs .tab + .tab {
    padding-left: 14px;
}
.req-table {
    margin-top: 7px;
    height: 81px;
    border-top: 2px solid #d4d4d4;
    border-bottom: 1px solid #d4d4d4;
    background-color: #fff;
    font-weight: 300;
}
.req-row {
    display: grid;
    grid-template-columns: 220px 109px 109px 146px 146.5px 183.5px 146px 146.5px 183.5px 183px 147px 181.5px 1fr;
}
.req-row > div {
    padding-left: 12px;
}
.req-header {
    height: 36px;
    line-height: 34px;
    font-size: 13.4px;
    letter-spacing: -.15px;
    border-bottom: 3px solid #d4d4d4;
    color: #222;
}
.req-header > div {
    border-right: 1px solid #ddd;
    height: 33px;
}
.req-header > .c13 {
    border-right: none;
}
.c12 svg {
    vertical-align: -4px;
    margin-left: 5px;
}
.req-data {
    height: 35px;
    line-height: 37px;
    color: #333;
    font-size: 12.3px;
    letter-spacing: -.15px;
    border-bottom: 1px solid #e3e3e3;
}
.req-data a {
    color: #2b2bb0;
}
.req-data > div {
    white-space: nowrap;
}
.req-data > .c8, .req-data > .c11, .req-data > .c12 {
    padding-left: 10px;
}
.req-scroll {
    position: relative;
}
.req-scroll .tri-up {
    position: absolute;
    top: 7px;
    left: 0;
}
.req-scroll .tri-down {
    position: absolute;
    top: 22px;
    left: 0;
}
.req-tail {
    height: 8px;
    background-color: #f4f4f4;
}
.req-pager {
    display: flex;
    align-items: center;
    height: 35px;
    margin-top: 8px;
    padding-left: 860px;
    font-size: 12px;
    font-weight: 300;
    color: #222;
}
.rp-prev {
    color: #666;
    margin-right: 17px;
}
.rp-input {
    width: 46px;
    height: 35px;
    background-color: #fff;
    border: 1px solid #eee;
    margin: 0 9px;
    text-align: center;
    line-height: 38px;
    font-size: 13px;
}
.rp-next {
    color: #666;
    margin-left: 53px;
}
.foot-strip {
    height: 2px;
    background-color: #1f5b63;
}
```
